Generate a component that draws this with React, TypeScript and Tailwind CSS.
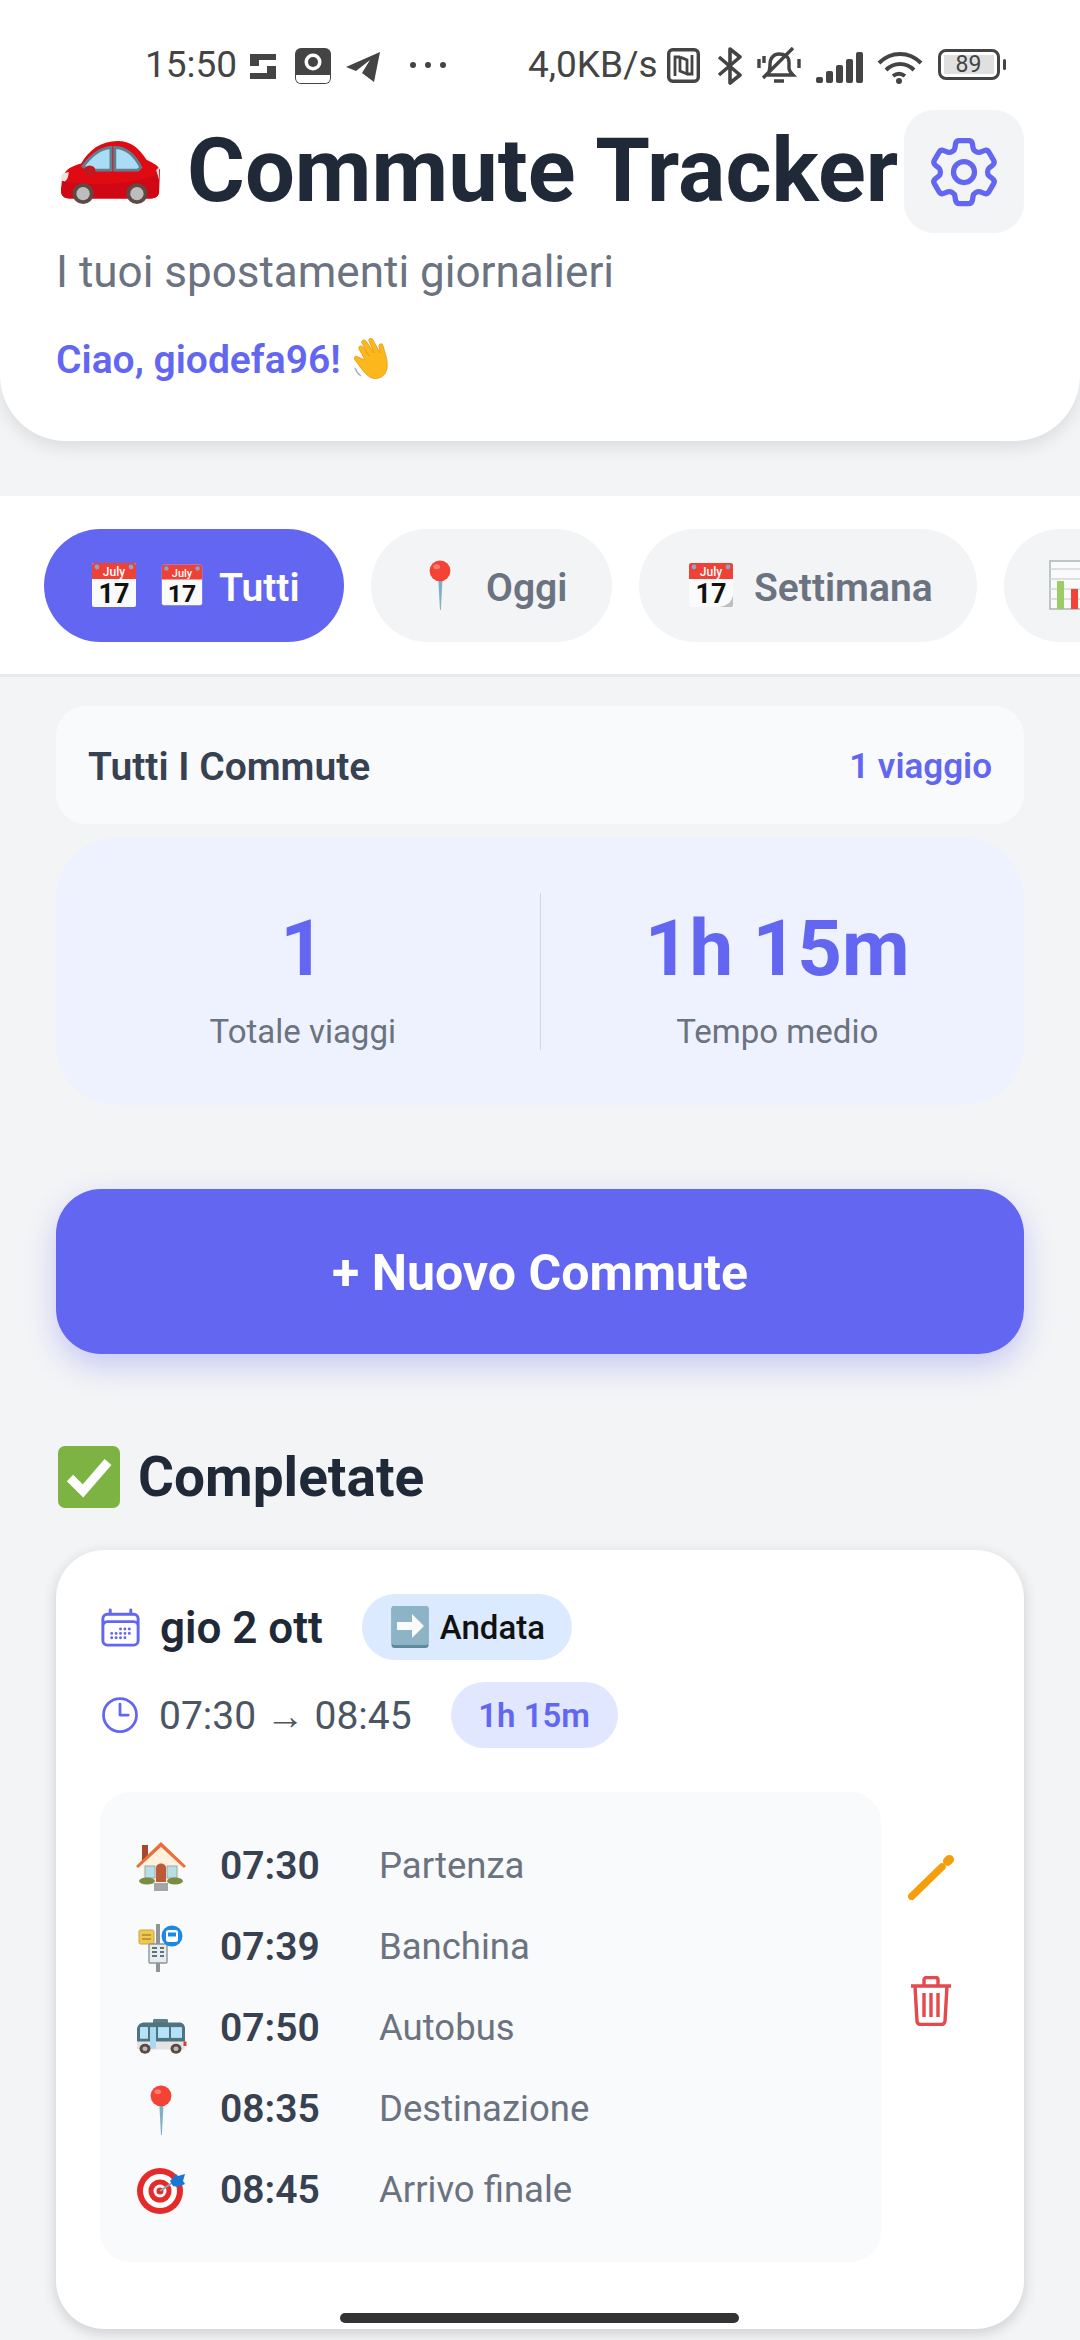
import { HiOutlineCalendarDays, HiOutlineClock, HiOutlineCog6Tooth } from "react-icons/hi2";

const CarEmoji = () => (
  <svg width="100" height="66" viewBox="0 0 104 70" preserveAspectRatio="none">
    <path d="M4 40c1-8 8-11 18-14C30 12 42 2 60 2c13 0 22 7 30 20 5 3 12 5 14 11l-1 24c-1 4-4 6-8 6H10c-6 0-9-3-9-9z" fill="#e00b12" />
    <path d="M2 44c20 6 78 6 101-8v21c-1 4-4 6-8 6H10c-6 0-9-3-9-9z" fill="#d00714" />
    <path d="M24 29c7-10 16-19 29-20l0 24H30z" fill="#aadcf6" stroke="#5f7f8e" strokeWidth="3" />
    <path d="M57 9c13 0 21 9 27 21l-3 3H57z" fill="#aadcf6" stroke="#5f7f8e" strokeWidth="3" />
    <circle cx="31" cy="34" r="6" fill="#c4161c" />
    <path d="M2 37l7-2c0 4-1 8-4 10l-4-1zM103 30l-3 3 3 10z" fill="#f1e4dc" />
    <circle cx="24" cy="58" r="11" fill="#5d4a44" />
    <circle cx="24" cy="58" r="7" fill="#bdbdbd" />
    <circle cx="80" cy="58" r="11" fill="#5d4a44" />
    <circle cx="80" cy="58" r="7" fill="#bdbdbd" />
  </svg>
);

const WaveEmoji = () => (
  <svg width="44" height="44" viewBox="0 0 44 44">
    <path d="M12 22L6 11c-1-3 2-4 4-2l6 9-7-13c-1-3 2-4 4-2l8 12-5-12c-1-3 3-4 4-1l7 13-1-7c0-3 4-3 4 0 2 7 5 14 4 22-1 8-8 12-15 10-6-2-11-10-17-18-2-3 1-5 3-3z" fill="#fbb81c" stroke="#e8960f" strokeWidth="0.8" />
    <path d="M2 30c1 3 3 6 6 8" stroke="#9fb7c9" strokeWidth="1.4" fill="none" />
  </svg>
);

const CalendarEmoji = ({ size = 48, curl = false }: { size?: number; curl?: boolean }) => (
  <svg width={size} height={size} viewBox="0 0 48 48">
    <rect x="2" y="2" width="44" height="44" rx="2" fill="#fafafa" />
    <path d="M2 4c0-1 1-2 2-2h40c1 0 2 1 2 2v14H2z" fill="#ef4136" />
    <circle cx="7" cy="6" r="2.4" fill="#8fa3c7" />
    <circle cx="41" cy="6" r="2.4" fill="#8fa3c7" />
    <text x="24" y="15" textAnchor="middle" fontSize="12" fontWeight="500" fill="#fff" fontFamily="Roboto, sans-serif">July</text>
    <text x="24" y="42" textAnchor="middle" fontSize="27" fontWeight="700" fill="#111" fontFamily="Roboto, sans-serif">17</text>
    {curl && <path d="M46 34v10c0 1-1 2-2 2H32c8-1 13-5 14-12z" fill="#bdbdbd" />}
  </svg>
);

const PinEmoji = ({ w = 26, h = 50 }: { w?: number; h?: number }) => (
  <svg width={w} height={h} viewBox="0 0 30 60">
    <path d="M13 24h5l-2 36h-1z" fill="#7fb1c4" />
    <circle cx="15" cy="13" r="12.500" fill="#f44336" />
    <ellipse cx="11" cy="8" rx="4" ry="3" fill="#ff7d6e" />
  </svg>
);

const ChartEmoji = () => (
  <svg width="48" height="50" viewBox="0 0 48 50">
    <rect x="1" y="1" width="60" height="48" fill="#fafafa" stroke="#a9b4b8" strokeWidth="1.5" />
    <path d="M1 9h60M1 19h60M1 29h60M1 39h60" stroke="#cfd8dc" strokeWidth="1.5" />
    <rect x="8" y="21" width="7" height="28" fill="#9ccc65" />
    <rect x="22" y="29" width="7" height="20" fill="#f44336" />
  </svg>
);

const HouseEmoji = () => (
  <svg width="50" height="50" viewBox="0 0 50 50">
    <rect x="6" y="3" width="6" height="16" fill="#a5482b" />
    <path d="M25 1L47 25H3z" fill="#fff1dc" />
    <rect x="7" y="20" width="36" height="20" fill="#fff1dc" />
    <path d="M0 24L25 0l25 24-2 2L25 5 2 26z" fill="#e8703a" />
    <rect x="9" y="24" width="10" height="12" fill="#b9dfe6" stroke="#8a9a9e" strokeWidth="0.8" />
    <rect x="31" y="24" width="10" height="12" fill="#b9dfe6" stroke="#8a9a9e" strokeWidth="0.8" />
    <path d="M20 40V26c0-6 10-6 10 0v14z" fill="#bd5a3a" />
    <ellipse cx="11" cy="39" rx="8" ry="3.500" fill="#7a8c42" />
    <ellipse cx="39" cy="39" rx="8" ry="3.500" fill="#7a8c42" />
    <rect x="18" y="41" width="14" height="8" fill="#a5a5a5" />
  </svg>
);

const BusStopEmoji = () => (
  <svg width="50" height="50" viewBox="0 0 50 50">
    <rect x="20" y="1" width="4" height="48" fill="#8f9498" />
    <rect x="3" y="7" width="15" height="14" rx="1.500" fill="#efc84f" stroke="#c5a543" />
    <path d="M6 12h9M6 16h9" stroke="#a98a2a" strokeWidth="1.400" />
    <rect x="13" y="21" width="18" height="19" rx="1" fill="#e8ecef" stroke="#8f9498" strokeWidth="1.400" />
    <path d="M16 25h5M16 29h5M16 33h5M24 25h4M24 29h4M24 33h4" stroke="#60707c" strokeWidth="2" />
    <circle cx="36" cy="13" r="10.500" fill="#1e88e5" />
    <rect x="30" y="7" width="12" height="12" rx="2.500" fill="#fff" />
    <rect x="32" y="9.500" width="8" height="4" fill="#1e88e5" />
  </svg>
);

const BusEmoji = () => (
  <svg width="52" height="36" viewBox="0 0 52 40" className="mt-[16px]" preserveAspectRatio="none">
    <rect x="18" y="0" width="15" height="5" rx="1.500" fill="#5b7f8a" />
    <path d="M2 32V12c0-5 3-8 8-8h34c4 0 6 3 6 7v21z" fill="#4f7480" />
    <path d="M2 25h48v7c0 1-1 2-2 2H4c-1 0-2-1-2-2z" fill="#e4e4e4" />
    <rect x="5" y="9" width="8" height="13" rx="1" fill="#b5e2f8" />
    <rect x="15" y="9" width="6" height="24" fill="#a9d8f0" />
    <rect x="23" y="9" width="11" height="12" fill="#b5e2f8" />
    <rect x="36" y="9" width="11" height="12" fill="#b5e2f8" />
    <circle cx="10" cy="33" r="5.500" fill="#5d4a44" />
    <circle cx="10" cy="33" r="2.500" fill="#bdbdbd" />
    <circle cx="41" cy="33" r="5.500" fill="#5d4a44" />
    <circle cx="41" cy="33" r="2.500" fill="#bdbdbd" />
    <rect x="48.500" y="25" width="3" height="5" fill="#e53935" />
  </svg>
);

const TargetEmoji = () => (
  <svg width="50" height="48" viewBox="0 0 50 48">
    <circle cx="24" cy="24" r="23" fill="#e62a2a" />
    <circle cx="24" cy="24" r="17" fill="#fff" />
    <circle cx="24" cy="24" r="11.500" fill="#e62a2a" />
    <circle cx="24" cy="24" r="6.500" fill="#fff" />
    <circle cx="24" cy="24" r="3.500" fill="#e62a2a" />
    <path d="M24 24l15-10" stroke="#90a4ae" strokeWidth="2" />
    <path d="M34 14l6-7 2 2 7-2-2 7 2 3-7 3-5-1z" fill="#1976d2" />
  </svg>
);

const ArrowEmoji = () => (
  <svg width="38" height="44" viewBox="0 0 38 44">
    <rect x="0.500" y="1" width="37" height="42" rx="3" fill="#5f8a9c" />
    <rect x="0.500" y="1" width="37" height="39" rx="3" fill="#8cb3c6" />
    <path d="M6 17h15v-8l12 12-12 12v-8H6z" fill="#fafafa" />
  </svg>
);

const StatusBar = () => (
  <div className="flex h-[90px] items-end pb-[3px] pl-[145px] text-[37px] leading-[44px] text-[#444444]">
    <span className="w-[105px]">15:50</span>
    <svg width="26" height="25" viewBox="0 0 26 25" className="mb-[8px]" fill="#444444">
      <path d="M0 0h26v6H9v6H0zM26 25H0v-6h17v-7h9z" />
    </svg>
    <svg width="36" height="36" viewBox="0 0 36 36" className="ml-[19px] mb-[3px]">
      <rect width="36" height="36" rx="6" fill="#444444" />
      <path d="M1 27h34v3c0 3-2 5-5 5H6c-3 0-5-2-5-5z" fill="#fff" />
      <circle cx="18" cy="14" r="8.500" fill="#fff" />
      <circle cx="18" cy="14" r="5" fill="#444444" />
    </svg>
    <svg width="34" height="30" viewBox="0 0 34 30" className="ml-[15px] mb-[5px]" fill="#444444">
      <path d="M34 0L28 30 16 21 24 8 10 19 0 15z" />
    </svg>
    <div className="ml-[30px] mb-[19px] flex gap-[9px]">
      <span className="size-[6px] rounded-full bg-[#444444]" />
      <span className="size-[6px] rounded-full bg-[#444444]" />
      <span className="size-[6px] rounded-full bg-[#444444]" />
    </div>
    <span className="ml-[82px]">4,0KB/s</span>
    <svg width="33" height="35" viewBox="0 0 33 35" className="ml-[9px] mb-[4px]" fill="none" stroke="#444444" strokeWidth="3.400">
      <rect x="1.700" y="1.700" width="29.600" height="31.600" rx="4" />
      <path d="M13 9H8v19M20 26h5V7M13 9v14l7 3V12l-7-3" strokeWidth="2.800" />
    </svg>
    <svg width="25" height="38" viewBox="0 0 25 38" className="ml-[17px] mb-[2px]" fill="none" stroke="#444444" strokeWidth="3.600" strokeLinejoin="round">
      <path d="M2 10l21 18-10 8V2l10 8L2 28" />
    </svg>
    <svg width="44" height="38" viewBox="0 0 44 38" className="ml-[15px] mb-[2px]" fill="none" stroke="#444444" strokeWidth="3.400">
      <path d="M10 28c3-3 3-6 3-11 0-6 4-10 9-10 6 0 10 3 10 8v6c0 3 2 5 4 7zM6 31L36 1M17 34h10M2 12v9M7 9v7M42 12v9" />
    </svg>
    <svg width="47" height="31" viewBox="0 0 47 31" className="ml-[15px] mb-[4px]" fill="#444444">
      <rect x="0" y="25" width="7" height="6" rx="2" />
      <rect x="10" y="19" width="7" height="12" rx="2" />
      <rect x="20" y="13" width="7" height="18" rx="2" />
      <rect x="30" y="7" width="7" height="24" rx="2" />
      <rect x="40" y="0" width="7" height="31" rx="2" />
    </svg>
    <svg width="46" height="35" viewBox="0 0 46 35" className="ml-[14px] mb-[2px]" fill="none" stroke="#444444" strokeWidth="4">
      <path d="M2 13c12-12 30-12 42 0M9 20c8-8 20-8 28 0M16 26c4-3 8-3 12 0" />
      <circle cx="22" cy="31" r="3" fill="#444444" stroke="none" />
    </svg>
    <div className="ml-[15px] mb-[7px] flex items-center">
      <div className="flex h-[31px] w-[62px] items-center justify-center rounded-[8px] border-[3px] border-[#444444] p-[3px]">
        <span className="flex h-[19px] w-full items-center justify-center bg-[#e0e0e0] text-[23px] leading-none">89</span>
      </div>
      <span className="ml-[3px] h-[11px] w-[3px] rounded-full bg-[#444444]" />
    </div>
  </div>
);

const stops = [
  { icon: <HouseEmoji />, time: "07:30", label: "Partenza" },
  { icon: <BusStopEmoji />, time: "07:39", label: "Banchina" },
  { icon: <BusEmoji />, time: "07:50", label: "Autobus" },
  { icon: <PinEmoji />, time: "08:35", label: "Destinazione" },
  { icon: <TargetEmoji />, time: "08:45", label: "Arrivo finale" },
];

export default function App() {
  return (
    <div className="relative h-[2340px] w-[1080px] overflow-hidden bg-[#f3f4f6] font-['Roboto',sans-serif]">
      <header className="h-[441px] rounded-b-[66px] bg-white shadow-[0_6px_18px_rgba(0,0,0,0.1)]">
        <StatusBar />
        <div className="mt-[20px] flex items-center pl-[60px] pr-[56px]">
          <CarEmoji />
          <h1 className="ml-[27px] shrink-0 text-[88.500px] font-bold leading-[123px] text-[#1f2937]">Commute Tracker</h1>
          <button className="ml-auto flex h-[123px] w-[120px] items-center justify-center rounded-[30px] bg-[#f3f4f6] text-[#6366f1]">
            <HiOutlineCog6Tooth size={84} />
          </button>
        </div>
        <p className="ml-[56px] mt-[14px] text-[44px] leading-[50px] text-[#6b7280]">I tuoi spostamenti giornalieri</p>
        <div className="ml-[56px] mt-[38px] flex items-center text-[39px] font-semibold leading-[50px] text-[#6366f1]">
          Ciao, giodefa96!
          <span className="ml-[12px]"><WaveEmoji /></span>
        </div>
      </header>

      <nav className="mt-[55px] flex h-[181px] items-center gap-[27px] overflow-hidden border-b-[3px] border-[#e9eaec] bg-white pl-[44px] text-[39px] font-semibold">
        <div className="flex h-[113px] w-[300px] shrink-0 items-center rounded-full bg-[#6366f1] pl-[46px] text-white">
          <CalendarEmoji />
          <span className="ml-[22px]"><CalendarEmoji size={44} /></span>
          <span className="ml-[15px] pt-[6px]">Tutti</span>
        </div>
        <div className="flex h-[113px] w-[241px] shrink-0 items-center gap-[33px] rounded-full bg-[#f3f4f6] pl-[56px] text-[#6b7280]">
          <PinEmoji />
          <span className="pt-[6px]">Oggi</span>
        </div>
        <div className="flex h-[113px] w-[338px] shrink-0 items-center gap-[19px] rounded-full bg-[#f3f4f6] pl-[48px] text-[#6b7280]">
          <CalendarEmoji curl />
          <span className="pt-[6px]">Settimana</span>
        </div>
        <div className="flex h-[113px] w-[200px] shrink-0 items-center rounded-full bg-[#f3f4f6] pl-[45px]">
          <ChartEmoji />
        </div>
      </nav>

      <main className="px-[56px]">
        <div className="mt-[29px] flex h-[118px] items-center justify-between rounded-[30px] bg-[#f9fafb] px-[32px] pt-[5px]">
          <span className="text-[39px] font-semibold text-[#374151]">Tutti I Commute</span>
          <span className="text-[35px] font-semibold text-[#6366f1]">1 viaggio</span>
        </div>

        <div className="mt-[14px] flex h-[267px] items-center rounded-[60px] bg-[#eef2ff] px-[10px]">
          <div className="flex-1 pt-[11px] text-center">
            <div className="text-[78px] font-bold leading-[92px] text-[#6366f1]">1</div>
            <div className="mt-[17px] text-[33px] leading-[40px] text-[#6b7280]">Totale viaggi</div>
          </div>
          <div className="h-[157px] w-[1px] bg-[#cfd6e6]" />
          <div className="flex-1 pt-[11px] text-center">
            <div className="text-[78px] font-bold leading-[92px] text-[#6366f1]">1h 15m</div>
            <div className="mt-[17px] text-[33px] leading-[40px] text-[#6b7280]">Tempo medio</div>
          </div>
        </div>

        <button className="mt-[84px] flex h-[165px] w-full items-center justify-center rounded-[45px] bg-[#6366f1] pt-[3px] text-[50px] font-bold text-white shadow-[0_12px_30px_rgba(99,102,241,0.3)]">
          + Nuovo Commute
        </button>

        <div className="mt-[87px] flex h-[72px] items-center text-[55px] font-bold text-[#1f2937]">
          <svg width="66" height="62" viewBox="0 0 66 62" className="mr-[16px]">
            <rect x="2" y="0" width="62" height="62" rx="7" fill="#7cb342" />
            <path d="M14 32l13 13 25-29" fill="none" stroke="#fff" strokeWidth="9" />
          </svg>
          Completate
        </div>

        <section className="mt-[37px] h-[779px] rounded-[48px] bg-white px-[44px] pt-[44px] shadow-[0_4px_14px_rgba(0,0,0,0.16)]">
          <div className="flex h-[66px] items-center">
            <HiOutlineCalendarDays size={47} className="-ml-[3px] text-[#6366f1]" />
            <span className="ml-[16px] pt-[2px] text-[44px] font-semibold text-[#1f2937]">gio 2 ott</span>
            <span className="ml-[39px] flex h-[66px] w-[210px] items-center rounded-full bg-[#dbeafe] pl-[29px] text-[33px] font-medium text-[#111111]">
              <ArrowEmoji />
              <span className="ml-[11px] pt-[2px]">Andata</span>
            </span>
          </div>
          <div className="mt-[22px] flex h-[66px] items-center">
            <HiOutlineClock size={44} className="-ml-[2px] text-[#6366f1]" />
            <span className="ml-[17px] pt-[2px] text-[39px] text-[#4b5563]">07:30 → 08:45</span>
            <span className="ml-[39px] flex h-[66px] w-[167px] items-center justify-center rounded-full bg-[#e0e7ff] pt-[2px] text-[33px] font-semibold text-[#6366f1]">1h 15m</span>
          </div>

          <div className="mt-[44px] flex">
            <div className="h-[470px] w-[781px] rounded-[30px] bg-[#f9fafb] pl-[33px] pt-[34px]">
              {stops.map((stop) => (
                <div key={stop.time} className="flex h-[81px] items-center">
                  <span className="flex w-[55px] justify-center">{stop.icon}</span>
                  <span className="ml-[32px] w-[159px] text-[39px] font-semibold text-[#374151]">{stop.time}</span>
                  <span className="text-[36.500px] text-[#6b7280]">{stop.label}</span>
                </div>
              ))}
            </div>
            <div className="ml-[27px] flex flex-col items-center pt-[62px]">
              <svg width="46" height="46" viewBox="0 0 50 50" fill="none" stroke="#f59e0b" strokeLinecap="round">
                <path d="M4 46L37 14" strokeWidth="8" />
                <path d="M43 8l2-2" strokeWidth="10" />
              </svg>
              <svg width="42" height="50" viewBox="0 0 42 50" fill="none" stroke="#e5484d" strokeWidth="3.400" className="mt-[76px]" strokeLinejoin="round">
                <path d="M1 10h40M14 10V4c0-1.500 1-2.500 2.500-2.500h9C27 1.500 28 2.500 28 4v6M5 10l2 35c0 2 1.500 3.500 3.500 3.500h21c2 0 3.500-1.500 3.500-3.500l2-35M14 17v24M21 17v24M28 17v24" />
              </svg>
            </div>
          </div>
        </section>
      </main>

      <div className="absolute bottom-[17px] left-[340px] h-[10px] w-[399px] rounded-full bg-[#333333]" />
    </div>
  );
}
